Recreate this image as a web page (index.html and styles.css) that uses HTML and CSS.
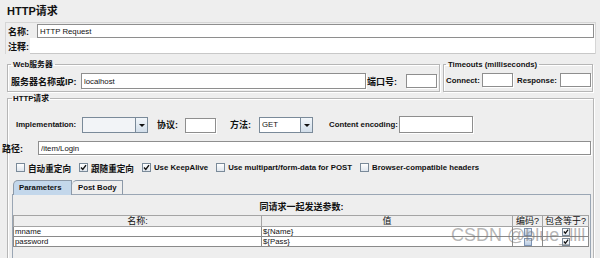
FILE: index.html
```html
<!DOCTYPE html>
<html>
  <head>
    <title>HTTP请求</title>
    <link rel="stylesheet" href="styles.css">
  </head>
  <body>
    <h1 class="title">HTTP请求</h1>

    <div class="namebox">
      <div class="row name-row">
        <label class="cn name-label">名称:</label>
        <input class="field name-field" type="text" value="HTTP Request">
      </div>
      <div class="row comment-row">
        <label class="cn comment-label">注释:</label>
        <div class="comment"></div>
      </div>
    </div>

    <div class="servers">
      <fieldset class="group web">
        <legend>Web服务器</legend>
        <div class="row">
          <label class="cn host-label">服务器名称或IP:</label>
          <input class="field host" type="text" value="localhost">
          <label class="cn port-label">端口号:</label>
          <input class="field port" type="text">
        </div>
      </fieldset>
      <fieldset class="group timeouts">
        <legend>Timeouts (milliseconds)</legend>
        <div class="row">
          <label class="connect-label">Connect:</label>
          <input class="field small" type="text">
          <label class="response-label">Response:</label>
          <input class="field small" type="text">
        </div>
      </fieldset>
    </div>

    <fieldset class="group http">
      <legend>HTTP请求</legend>

      <div class="row impl-row">
        <label class="impl-label">Implementation:</label>
        <div class="combo impl-combo"><span class="combo-text"></span><span class="combo-btn"></span></div>
        <label class="cn proto-label">协议:</label>
        <input class="field proto" type="text">
        <label class="cn method-label">方法:</label>
        <div class="combo method-combo"><span class="combo-text">GET</span><span class="combo-btn"></span></div>
        <label class="enc-label">Content encoding:</label>
        <input class="field enc" type="text">
      </div>

      <div class="row path-row">
        <label class="cn path-label">路径:</label>
        <input class="field path" type="text" value="/item/Login">
      </div>

      <div class="row checks">
        <span class="check"><span class="cb"></span><span class="cn-small">自动重定向</span></span>
        <span class="check"><span class="cb"><svg viewBox="0 0 7 7"><path d="M1 3.5 L2.8 5.5 L6 1.2"/></svg></span><span class="cn-small">跟随重定向</span></span>
        <span class="check"><span class="cb"><svg viewBox="0 0 7 7"><path d="M1 3.5 L2.8 5.5 L6 1.2"/></svg></span>Use KeepAlive</span>
        <span class="check"><span class="cb"></span>Use multipart/form-data for POST</span>
        <span class="check"><span class="cb"></span>Browser-compatible headers</span>
      </div>

      <div class="tabs">
        <span class="tab-gap"></span>
        <span class="tab tab-params">Parameters</span>
        <span class="tab tab-post">Post Body</span>
        <span class="tab-fill"></span>
      </div>

      <div class="panel">
        <div class="caption">同请求一起发送参数:</div>
        <table class="params">
          <colgroup>
            <col class="c-name">
            <col class="c-value">
            <col class="c-encode">
            <col class="c-equals">
          </colgroup>
          <tr>
            <th>名称:</th>
            <th>值</th>
            <th>编码?</th>
            <th>包含等于?</th>
          </tr>
          <tr>
            <td>mname</td>
            <td>${Name}</td>
            <td class="mid"><span class="cb tiny blue"></span></td>
            <td class="mid"><span class="cb tiny"><svg viewBox="0 0 7 7"><path d="M1 3.5 L2.8 5.5 L6 1.2"/></svg></span></td>
          </tr>
          <tr>
            <td>password</td>
            <td>${Pass}</td>
            <td class="mid"><span class="cb tiny blue"></span></td>
            <td class="mid"><span class="cb tiny"><svg viewBox="0 0 7 7"><path d="M1 3.5 L2.8 5.5 L6 1.2"/></svg></span></td>
          </tr>
        </table>
      </div>
    </fieldset>

    <div class="watermark">CSDN @blue_llll</div>
  </body>
</html>
```

FILE: styles.css
```css
body { margin: 0; width: 600px; height: 258px; overflow: hidden; position: relative; background: #eeeeee; color: #111; font-family: "Liberation Sans", "Noto Sans CJK SC", sans-serif; font-size: 7.8px; font-weight: bold; }

.title { margin: 0; padding: 5px 0 0 7px; height: 13px; font-size: 11px; line-height: 13px; }

.row { display: flex; align-items: center; }
label { flex-shrink: 0; white-space: nowrap; overflow: visible; }
.cn { font-size: 9px; }
.cn-small { font-size: 8.6px; }

.field { flex-shrink: 0; box-sizing: border-box; margin: 0; padding: 0 2px; height: 15px; border: 1px solid #8e8e8e; box-shadow: 1px 1px 0 #fff; background: #fff; font-family: inherit; font-size: 7.8px; font-weight: normal; color: #111; outline: none; }

/* name + comment */
.namebox { margin: 4px 4px 0 5px; border: 1px solid #d6d6d6; border-bottom: none; }
.name-row { height: 14px; padding-top: 1px; }
.name-label { width: 29px; padding-left: 2px; }
.name-field { flex: 1; height: 14px; margin-right: 1px; }
.comment-row { height: 16px; }
.comment-label { width: 22px; padding-left: 2px; }
.comment { flex: 1; align-self: stretch; background: #fff; border-bottom: 1px solid #c8c8c8; }

/* fieldsets */
.group { margin: 0; min-width: 0; border: 1px solid #b6b6b6; box-shadow: inset 1px 1px 0 #fff, 1px 1px 0 #fff; }
.group legend { padding: 0 2px; font-size: 7.8px; line-height: 11px; }

.servers { display: flex; margin: 5px 0 0 7px; }
.web { padding: 3px 2px 2px 2px; }
.web legend { margin-left: 1px; }
.host-label { width: 70px; padding-left: 1px; }
.host { width: 285px; height: 16px; }
.port-label { width: 39px; padding-left: 1px; }
.port { width: 31px; height: 14px; }

.timeouts { margin-left: 3px; padding: 3px 1px 2px 2px; }
.connect-label { width: 36px; }
.response-label { width: 43px; padding-left: 4px; }
.small { width: 31px; height: 14px; }

.http { margin: 1px 6px 0 7px; padding: 12px 2px 0 4px; height: 200px; }
.http legend { padding: 0 1px; }

/* implementation row */
.impl-row { height: 17px; padding-left: 4px; align-items: flex-end; }
.impl-row label { align-self: center; }
.impl-label { width: 66px; }
.combo { flex-shrink: 0; box-sizing: border-box; display: flex; height: 16px; border: 1px solid #7a8a99; background: #fff; }
.impl-combo { width: 66px; background: #f2f4f7; }
.method-combo { width: 54px; }
.combo-text { flex: 1; padding-left: 2px; font-weight: normal; line-height: 14px; }
.combo-btn { width: 11px; display: flex; align-items: center; justify-content: center; border-left: 1px solid #7a8a99; background: linear-gradient(#f2f6fa, #d2deea); }
.combo-btn::after { content: ""; margin-top: 1px; border-left: 3px solid transparent; border-right: 3px solid transparent; border-top: 3px solid #111; }
.proto-label { width: 28px; margin-left: 9px; }
.proto { width: 31px; height: 15px; }
.method-label { width: 29px; margin-left: 14px; }
.enc-label { width: 70px; margin-left: 16px; }
.enc { width: 74px; height: 17px; }

.path-row { height: 14px; margin: 8px 0 0 -11px; }
.path-label { width: 36px; padding-left: 1px; }
.path { flex: 1; height: 14px; }

/* checkboxes */
.checks { height: 11px; margin-top: 7px; padding-left: 4px; gap: 8px; }
.check { display: flex; align-items: center; gap: 3px; white-space: nowrap; }
.cb { flex-shrink: 0; box-sizing: border-box; width: 9px; height: 9px; display: flex; align-items: center; justify-content: center; border: 1px solid #7a8a99; background: linear-gradient(#fff, #dfe6ed); }
.cb svg { width: 7px; height: 7px; }
.cb path { fill: none; stroke: #111; stroke-width: 1.4; }

/* tabs */
.tabs { display: flex; height: 15px; margin-top: 7px; }
.tab-gap { width: 1px; border-bottom: 1px solid #9aa6b4; }
.tab { box-sizing: border-box; height: 15px; border: 1px solid #8c99a8; border-top-left-radius: 5px; line-height: 13px; background: #eeeeee; }
.tab-params { width: 59px; padding-left: 5px; border-bottom: none; background: #c3d7eb; }
.tab-post { width: 51px; padding-left: 6px; border-left: none; border-bottom-color: #9aa6b4; }
.tab-fill { flex: 1; border-bottom: 1px solid #9aa6b4; }

.panel { height: 70px; padding-top: 6px; border: 1px solid #9aa6b4; border-top: none; }
.caption { font-size: 9px; line-height: 12px; text-align: center; }

/* parameter table */
.params { margin-top: 2px; width: 575px; table-layout: fixed; border-collapse: collapse; }
.c-name { width: 248px; }
.c-value { width: 251px; }
.c-encode { width: 30px; }
.c-equals { width: 46px; }
.params th { height: 10px; padding: 0; border: 1px solid #a4a4a4; background: #eeeeee; font-size: 9px; font-weight: normal; line-height: 10px; white-space: nowrap; }
.params td { height: 9px; padding: 0 1px; border: 1px solid #8a8a8a; background: #fff; font-weight: normal; line-height: 9px; white-space: nowrap; overflow: hidden; }
.params td.mid { padding: 0; }
.cb.tiny { width: 8px; height: 8px; margin: 0 auto; }
.cb.blue { background: linear-gradient(#e4ecf6, #b9cbe2); border-color: #7d93b3; }

.watermark { position: absolute; left: 451px; top: 225px; font-family: "Liberation Sans", sans-serif; font-size: 18px; font-weight: normal; line-height: 21px; color: rgba(120, 120, 120, 0.55); white-space: nowrap; }
```
